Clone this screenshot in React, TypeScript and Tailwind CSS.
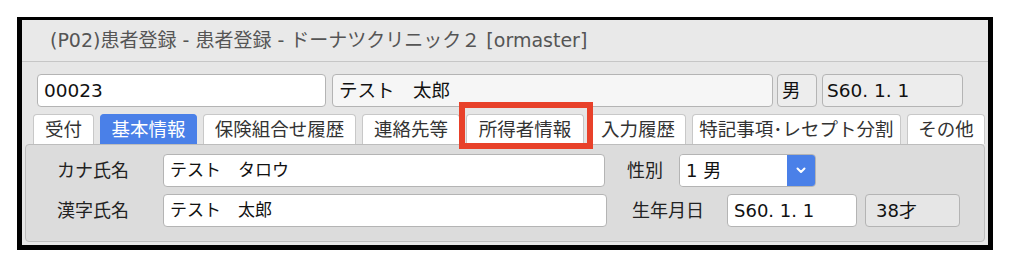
import React from "react"

const font = { fontFamily: '"DejaVu Sans", "Noto Sans CJK JP", sans-serif' }

const tabs = [
  { label: "受付", w: "w-[61px]" },
  { label: "基本情報", w: "w-[97px]", active: true },
  { label: "保険組合せ履歴", w: "w-[153px]" },
  { label: "連絡先等", w: "w-[98px]" },
  { label: "所得者情報", w: "w-[118px]" },
  { label: "入力履歴", w: "w-[96px]" },
  { label: "特記事項･レセプト分割", w: "w-[209px]" },
  { label: "その他", w: "w-[78px]" },
]

function Field({ value, className }: { value: string; className: string }) {
  return (
    <div
      className={`flex h-[33px] items-center rounded-[4px] border border-[#b4b4b4] px-[6px] text-[#111] ${className}`}
    >
      {value}
    </div>
  )
}

export default function App() {
  return (
    <div className="relative h-[264px] w-[1010px] bg-white" style={font}>
      <div className="ml-[17px] pt-[17px]">
        <div className="h-[233px] w-[976px] border-t-[3px] border-r-[5px] border-b-[5px] border-l-[5px] border-black bg-[#e6e6e6]">
          {/* title bar */}
          <div className="flex h-[42px] items-center border-b border-[#c6c6c6] bg-[#e9e9e9] pl-[28px] text-[19px] text-[#555]">
            (P02)患者登録 - 患者登録 - ドーナツクリニック２ [ormaster]
          </div>

          <div className="px-[3px]">
            {/* patient row */}
            <div className="mt-[12px] ml-[12px] flex text-[18.5px]">
              <Field value="00023" className="w-[289px] bg-white" />
              <Field value="テスト　太郎" className="ml-[6px] w-[441px] bg-[#f6f6f6]" />
              <Field value="男" className="ml-[4px] w-[40px] bg-[#ededed] pl-[4px]" />
              <Field value="S60. 1. 1" className="ml-[5px] w-[141px] bg-[#ededed] pl-[4px]" />
            </div>

            {/* tabs */}
            <div className="mt-[7px] ml-[8px] flex gap-[6px]">
              {tabs.map((t) => (
                <div
                  key={t.label}
                  className={`flex h-[30px] items-center justify-center rounded-t-[4px] border border-b-0 text-[18.5px] ${t.w} ${
                    t.active ? "border-[#4a80e8] bg-[#4a80e8] text-white" : "border-[#c8c8c8] bg-white text-[#333]"
                  }`}
                >
                  {t.label}
                </div>
              ))}
            </div>

            {/* panel */}
            <div className="h-[98px] w-[960px] rounded-[4px] border border-[#bdbdbd] bg-[#dcdcdc] pt-[9px]">
              <div className="flex items-center">
                <div className="ml-[31px] w-[106px] text-[18px] text-[#222]">カナ氏名</div>
                <Field value="テスト　タロウ" className="w-[442px] bg-white text-[17px]" />
                <div className="ml-[22px] w-[52px] text-[18px] text-[#222]">性別</div>
                <div className="flex h-[33px] w-[137px] overflow-hidden rounded-[4px] border border-[#b4b4b4]">
                  <div className="flex flex-1 items-center bg-white px-[6px] text-[18px] text-[#111]">1 男</div>
                  <div className="flex w-[28px] items-center justify-center bg-[#4a80e8]">
                    <svg width="10" height="7" viewBox="0 0 10 7">
                      <path d="M1.5 1.5 L5 5 L8.5 1.5" fill="none" stroke="white" strokeWidth="2" strokeLinecap="round" strokeLinejoin="round" />
                    </svg>
                  </div>
                </div>
              </div>
              <div className="mt-[7px] flex items-center">
                <div className="ml-[31px] w-[106px] text-[18px] text-[#222]">漢字氏名</div>
                <Field value="テスト　太郎" className="w-[444px] bg-white text-[17px]" />
                <div className="ml-[25px] w-[95px] text-[18px] text-[#222]">生年月日</div>
                <Field value="S60. 1. 1" className="w-[130px] bg-white text-[18px]" />
                <Field value="38才" className="ml-[8px] w-[95px] bg-[#e6e6e6] pl-[10px] text-[18px]" />
              </div>
            </div>
          </div>
        </div>
      </div>

      {/* annotation */}
      <div className="absolute top-[102px] left-[459px] h-[47px] w-[134px] border-[6px] border-[#e8412a]" />
    </div>
  )
}
